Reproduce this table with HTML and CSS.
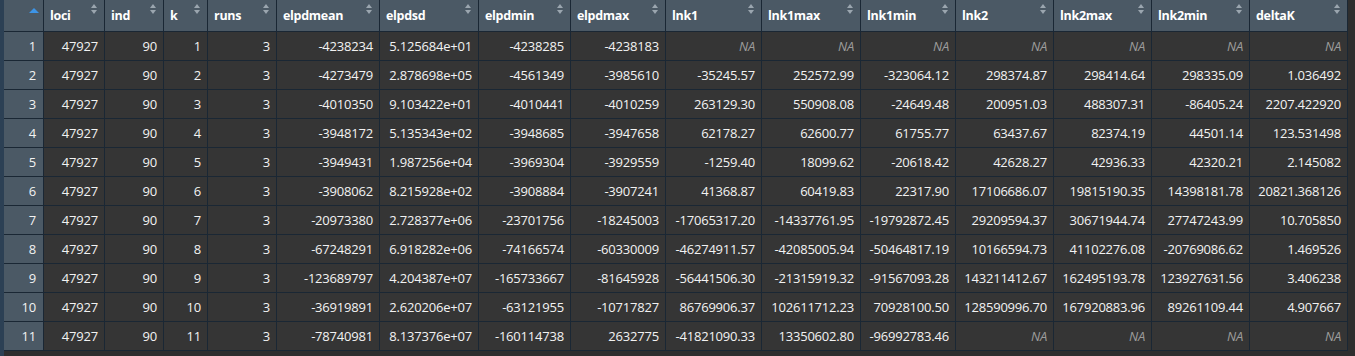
FILE: index.html
```html
<!DOCTYPE html>
<html lang="en">
<head>
    <meta charset="UTF-8">
    <title>Data Viewer - results</title>
    <link rel="stylesheet" href="styles.css">
</head>
<body>
    <div class="viewer">
        <div class="edge"></div>
        <div class="grid-wrap">
            <table class="data-grid">
                <colgroup>
                    <col style="width: 40px">
                    <col style="width: 61px">
                    <col style="width: 59px">
                    <col style="width: 44px">
                    <col style="width: 69px">
                    <col style="width: 103px">
                    <col style="width: 99px">
                    <col style="width: 92px">
                    <col style="width: 95px">
                    <col style="width: 96px">
                    <col style="width: 99px">
                    <col style="width: 95px">
                    <col style="width: 98px">
                    <col style="width: 98px">
                    <col style="width: 98px">
                    <col style="width: 98px">
                </colgroup>
                <thead>
                    <tr>
                        <th class="rownum-head">
                            <svg class="sort-active" width="10" height="5" viewBox="0 0 10 5"><polygon points="0,5 5,0 10,5" fill="#3d94e6"/></svg>
                        </th>
                        <th><div class="th-inner"><span>loci</span><svg class="sort" width="6" height="10" viewBox="0 0 6 10"><polygon points="0,4 3,0 6,4"/><polygon points="0,6 6,6 3,10"/></svg></div></th>
                        <th><div class="th-inner"><span>ind</span><svg class="sort" width="6" height="10" viewBox="0 0 6 10"><polygon points="0,4 3,0 6,4"/><polygon points="0,6 6,6 3,10"/></svg></div></th>
                        <th><div class="th-inner"><span>k</span><svg class="sort" width="6" height="10" viewBox="0 0 6 10"><polygon points="0,4 3,0 6,4"/><polygon points="0,6 6,6 3,10"/></svg></div></th>
                        <th><div class="th-inner"><span>runs</span><svg class="sort" width="6" height="10" viewBox="0 0 6 10"><polygon points="0,4 3,0 6,4"/><polygon points="0,6 6,6 3,10"/></svg></div></th>
                        <th><div class="th-inner"><span>elpdmean</span><svg class="sort" width="6" height="10" viewBox="0 0 6 10"><polygon points="0,4 3,0 6,4"/><polygon points="0,6 6,6 3,10"/></svg></div></th>
                        <th><div class="th-inner"><span>elpdsd</span><svg class="sort" width="6" height="10" viewBox="0 0 6 10"><polygon points="0,4 3,0 6,4"/><polygon points="0,6 6,6 3,10"/></svg></div></th>
                        <th><div class="th-inner"><span>elpdmin</span><svg class="sort" width="6" height="10" viewBox="0 0 6 10"><polygon points="0,4 3,0 6,4"/><polygon points="0,6 6,6 3,10"/></svg></div></th>
                        <th><div class="th-inner"><span>elpdmax</span><svg class="sort" width="6" height="10" viewBox="0 0 6 10"><polygon points="0,4 3,0 6,4"/><polygon points="0,6 6,6 3,10"/></svg></div></th>
                        <th><div class="th-inner"><span>lnk1</span><svg class="sort" width="6" height="10" viewBox="0 0 6 10"><polygon points="0,4 3,0 6,4"/><polygon points="0,6 6,6 3,10"/></svg></div></th>
                        <th><div class="th-inner"><span>lnk1max</span><svg class="sort" width="6" height="10" viewBox="0 0 6 10"><polygon points="0,4 3,0 6,4"/><polygon points="0,6 6,6 3,10"/></svg></div></th>
                        <th><div class="th-inner"><span>lnk1min</span><svg class="sort" width="6" height="10" viewBox="0 0 6 10"><polygon points="0,4 3,0 6,4"/><polygon points="0,6 6,6 3,10"/></svg></div></th>
                        <th><div class="th-inner"><span>lnk2</span><svg class="sort" width="6" height="10" viewBox="0 0 6 10"><polygon points="0,4 3,0 6,4"/><polygon points="0,6 6,6 3,10"/></svg></div></th>
                        <th><div class="th-inner"><span>lnk2max</span><svg class="sort" width="6" height="10" viewBox="0 0 6 10"><polygon points="0,4 3,0 6,4"/><polygon points="0,6 6,6 3,10"/></svg></div></th>
                        <th><div class="th-inner"><span>lnk2min</span><svg class="sort" width="6" height="10" viewBox="0 0 6 10"><polygon points="0,4 3,0 6,4"/><polygon points="0,6 6,6 3,10"/></svg></div></th>
                        <th><div class="th-inner"><span>deltaK</span><svg class="sort" width="6" height="10" viewBox="0 0 6 10"><polygon points="0,4 3,0 6,4"/><polygon points="0,6 6,6 3,10"/></svg></div></th>
                    </tr>
                </thead>
                <tbody id="grid-body"></tbody>
            </table>
        </div>
    </div>

    <script>
        // rows as printed by the R data viewer, null = NA
        const rows = [
            ['47927', '90', '1', '3', '-4238234', '5.125684e+01', '-4238285', '-4238183', null, null, null, null, null, null, null],
            ['47927', '90', '2', '3', '-4273479', '2.878698e+05', '-4561349', '-3985610', '-35245.57', '252572.99', '-323064.12', '298374.87', '298414.64', '298335.09', '1.036492'],
            ['47927', '90', '3', '3', '-4010350', '9.103422e+01', '-4010441', '-4010259', '263129.30', '550908.08', '-24649.48', '200951.03', '488307.31', '-86405.24', '2207.422920'],
            ['47927', '90', '4', '3', '-3948172', '5.135343e+02', '-3948685', '-3947658', '62178.27', '62600.77', '61755.77', '63437.67', '82374.19', '44501.14', '123.531498'],
            ['47927', '90', '5', '3', '-3949431', '1.987256e+04', '-3969304', '-3929559', '-1259.40', '18099.62', '-20618.42', '42628.27', '42936.33', '42320.21', '2.145082'],
            ['47927', '90', '6', '3', '-3908062', '8.215928e+02', '-3908884', '-3907241', '41368.87', '60419.83', '22317.90', '17106686.07', '19815190.35', '14398181.78', '20821.368126'],
            ['47927', '90', '7', '3', '-20973380', '2.728377e+06', '-23701756', '-18245003', '-17065317.20', '-14337761.95', '-19792872.45', '29209594.37', '30671944.74', '27747243.99', '10.705850'],
            ['47927', '90', '8', '3', '-67248291', '6.918282e+06', '-74166574', '-60330009', '-46274911.57', '-42085005.94', '-50464817.19', '10166594.73', '41102276.08', '-20769086.62', '1.469526'],
            ['47927', '90', '9', '3', '-123689797', '4.204387e+07', '-165733667', '-81645928', '-56441506.30', '-21315919.32', '-91567093.28', '143211412.67', '162495193.78', '123927631.56', '3.406238'],
            ['47927', '90', '10', '3', '-36919891', '2.620206e+07', '-63121955', '-10717827', '86769906.37', '102611712.23', '70928100.50', '128590996.70', '167920883.96', '89261109.44', '4.907667'],
            ['47927', '90', '11', '3', '-78740981', '8.137376e+07', '-160114738', '2632775', '-41821090.33', '13350602.80', '-96992783.46', null, null, null, null]
        ];

        const body = document.getElementById('grid-body');
        rows.forEach((row, i) => {
            const tr = document.createElement('tr');
            const num = document.createElement('td');
            num.className = 'rownum';
            num.textContent = i + 1;
            tr.appendChild(num);
            row.forEach(value => {
                const td = document.createElement('td');
                if (value === null) {
                    td.className = 'na';
                    td.textContent = 'NA';
                } else {
                    td.textContent = value;
                }
                tr.appendChild(td);
            });
            body.appendChild(tr);
        });
    </script>
</body>
</html>
```

FILE: styles.css
```css
* {
    margin: 0;
    padding: 0;
    box-sizing: border-box;
}

:root {
    --edge: #2c4054;
    --head-bg: #4b5965;
    --cell-bg: #353535;
    --line: #1a2734;
    --text: #f2f2f2;
    --muted: #9c9c9c;
}

body {
    background: #2b2b2b;
    font-family: "Open Sans", "Noto Sans", sans-serif;
    color: var(--text);
    height: 356px;
    overflow: hidden;
}

.viewer {
    display: flex;
    height: 100%;
}

.edge {
    width: 4px;
    flex-shrink: 0;
    background: var(--edge);
}

.grid-wrap {
    flex: 1;
    background: #2e2e2e;
}

.data-grid {
    table-layout: fixed;
    width: 1344px;
    border-collapse: separate;
    border-spacing: 0;
}

th,
td {
    border-right: 1px solid var(--line);
    border-bottom: 1px solid var(--line);
    white-space: nowrap;
    overflow: hidden;
}

th {
    height: 32px;
    background: var(--head-bg);
    color: #ffffff;
    font-size: 12.5px;
    font-weight: 700;
    letter-spacing: -0.3px;
    text-align: left;
    padding: 0 6px 0 6px;
    vertical-align: top;
}

.th-inner {
    display: flex;
    justify-content: space-between;
    align-items: flex-start;
    height: 31px;
}

.th-inner span {
    line-height: 31px;
}

.sort {
    margin-top: 4px;
    margin-right: 1px;
    fill: #9ba6af;
    flex-shrink: 0;
}

.rownum-head {
    text-align: right;
    padding: 0 4px 0 0;
}

.sort-active {
    margin-top: 8px;
    display: inline-block;
}

td {
    height: 29px;
    background: var(--cell-bg);
    font-size: 13px;
    letter-spacing: -0.2px;
    text-align: right;
    padding: 0 6px 0 4px;
    vertical-align: middle;
}

td.rownum {
    background: var(--head-bg);
    padding-right: 7px;
}

td.na {
    color: var(--muted);
    font-style: italic;
}
```
